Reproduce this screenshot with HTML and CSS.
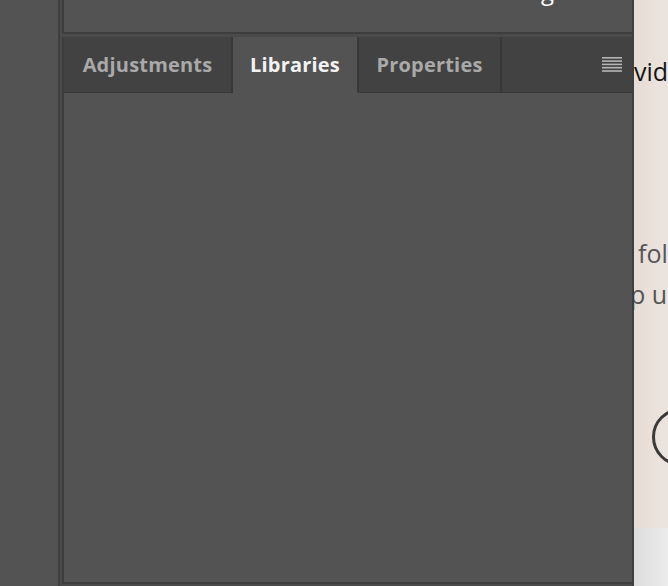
FILE: index.html
```html
<!DOCTYPE html>
<html>
<head>
<meta charset="utf-8">
<link rel="stylesheet" href="styles.css">
</head>
<body>
<div class="app">
  <div class="sidebar"></div>
  <div class="dock">
    <div class="top-panel"><span class="glyph">g</span></div>
    <div class="panel">
      <div class="tabbar">
        <div class="tab">Adjustments</div>
        <div class="tab active">Libraries</div>
        <div class="tab">Properties</div>
        <div class="tab-fill">
          <svg class="menu-icon" width="20" height="15" viewBox="0 0 20 15">
            <rect x="0" y="0" width="20" height="1.6" fill="#b5b5b5"/>
            <rect x="0" y="3.3" width="20" height="1.6" fill="#b5b5b5"/>
            <rect x="0" y="6.6" width="20" height="1.6" fill="#b5b5b5"/>
            <rect x="0" y="9.9" width="20" height="1.6" fill="#b5b5b5"/>
            <rect x="0" y="13.2" width="20" height="1.6" fill="#b5b5b5"/>
          </svg>
        </div>
      </div>
      <div class="panel-body"></div>
    </div>
  </div>
  <div class="page">
    <div class="page-main">
      <div class="line heading">vide</div>
      <div class="line para one">fol</div>
      <div class="line para two">p u</div>
      <div class="circle"></div>
    </div>
    <div class="page-foot"></div>
  </div>
</div>
</body>
</html>
```
FILE: styles.css
```css
html, body {
  margin: 0;
  padding: 0;
  width: 668px;
  height: 586px;
  overflow: hidden;
  background: #535353;
  font-family: "Open Sans", "DejaVu Sans", sans-serif;
}
.app {
  display: flex;
  height: 586px;
}
.sidebar {
  width: 58px;
  flex: none;
  background: #535353;
  border-right: 2px solid #3f3f3f;
}
.dock {
  width: 570px;
  flex: none;
  display: flex;
  flex-direction: column;
  background: #4a4a4a;
  padding-left: 2px;
  border-right: 2px solid #3f3f3f;
}
.top-panel {
  height: 32px;
  background: #535353;
  border-left: 2px solid #3d3d3d;
  border-bottom: 2px solid #3d3d3d;
  position: relative;
  overflow: hidden;
}
.glyph {
  position: absolute;
  left: 477px;
  top: -26px;
  font-size: 24px;
  color: #fff;
}
.panel {
  flex: 1;
  margin-top: 3px;
  display: flex;
  flex-direction: column;
  border-left: 2px solid #3d3d3d;
  border-bottom: 2px solid #3d3d3d;
  margin-bottom: 2px;
}
.tabbar {
  display: flex;
  height: 56px;
  background: #424242;
}
.tab {
  display: flex;
  align-items: center;
  justify-content: center;
  height: 55px;
  border-right: 2px solid #383838;
  border-bottom: 1px solid #383838;
  font-weight: 700;
  font-size: 20px;
  color: #a9a9a9;
  letter-spacing: 0.2px;
}
.tab:nth-child(1) { width: 167px; }
.tab:nth-child(2) { width: 124px; }
.tab:nth-child(3) { width: 141px; }
.tab.active {
  background: #535353;
  color: #f2f2f2;
  border-bottom-color: #535353;
}
.tab-fill {
  flex: 1;
  display: flex;
  justify-content: flex-end;
  align-items: center;
  padding-right: 10px;
  border-bottom: 1px solid #383838;
  height: 55px;
}
.menu-icon { display: block; }
.panel-body {
  flex: 1;
  background: #535353;
}
.page {
  flex: 1;
  display: flex;
  flex-direction: column;
  overflow: hidden;
  background: #e9e1db;
}
.page-main {
  flex: 1;
  background: linear-gradient(90deg, #e6ddd6, #ece4de);
}
.line {
  white-space: nowrap;
  font-size: 25px;
}
.heading {
  margin-top: 54px;
  margin-left: 0;
  color: #141414;
  font-weight: 400;
}
.para {
  color: #555;
  font-size: 25px;
}
.para.one {
  margin-top: 148px;
  margin-left: 4px;
}
.para.two {
  margin-top: 7px;
  margin-left: -4px;
}
.circle {
  margin-top: 97px;
  margin-left: 18px;
  width: 52px;
  height: 52px;
  border: 3px solid #3a3a3a;
  border-radius: 50%;
}
.page-foot {
  height: 58px;
  background: linear-gradient(90deg, #dcdcdc, #ececec);
}
```
